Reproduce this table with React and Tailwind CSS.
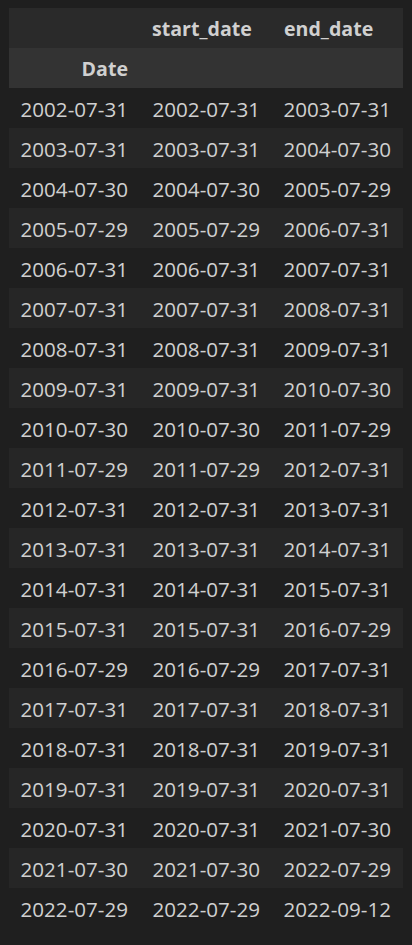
import React from "react";

const rows = [
  ["2002-07-31", "2002-07-31", "2003-07-31"],
  ["2003-07-31", "2003-07-31", "2004-07-30"],
  ["2004-07-30", "2004-07-30", "2005-07-29"],
  ["2005-07-29", "2005-07-29", "2006-07-31"],
  ["2006-07-31", "2006-07-31", "2007-07-31"],
  ["2007-07-31", "2007-07-31", "2008-07-31"],
  ["2008-07-31", "2008-07-31", "2009-07-31"],
  ["2009-07-31", "2009-07-31", "2010-07-30"],
  ["2010-07-30", "2010-07-30", "2011-07-29"],
  ["2011-07-29", "2011-07-29", "2012-07-31"],
  ["2012-07-31", "2012-07-31", "2013-07-31"],
  ["2013-07-31", "2013-07-31", "2014-07-31"],
  ["2014-07-31", "2014-07-31", "2015-07-31"],
  ["2015-07-31", "2015-07-31", "2016-07-29"],
  ["2016-07-29", "2016-07-29", "2017-07-31"],
  ["2017-07-31", "2017-07-31", "2018-07-31"],
  ["2018-07-31", "2018-07-31", "2019-07-31"],
  ["2019-07-31", "2019-07-31", "2020-07-31"],
  ["2020-07-31", "2020-07-31", "2021-07-30"],
  ["2021-07-30", "2021-07-30", "2022-07-29"],
  ["2022-07-29", "2022-07-29", "2022-09-12"],
];

export default function App() {
  return (
    <div
      className="w-[412px] h-[945px] bg-[#1f1f1f] pt-2 pl-[9px] text-[#d0d0d0] text-[20.6px]"
      style={{ fontFamily: '"Open Sans", "Noto Sans", sans-serif' }}
    >
      <div className="w-[394px] flex flex-col">
        <div className="h-10 pt-[2px] bg-[#2a2a2a] grid grid-cols-[131px_132px_131px] items-center font-bold text-[19.6px]">
          <div />
          <div className="pl-3">start_date</div>
          <div className="pl-3">end_date</div>
        </div>
        <div className="h-10 pt-[2px] bg-[#333333] grid grid-cols-[131px_132px_131px] items-center font-bold text-[19.6px]">
          <div className="text-right pr-3">Date</div>
          <div />
          <div />
        </div>
        {rows.map((r, i) => (
          <div
            key={i}
            className={
              "h-10 pt-[3px] grid grid-cols-[131px_132px_131px] items-center " +
              (i % 2 === 1 ? "bg-[#262626]" : "")
            }
          >
            <div className="text-right pr-3">{r[0]}</div>
            <div className="text-right pr-3">{r[1]}</div>
            <div className="text-right pr-3">{r[2]}</div>
          </div>
        ))}
      </div>
    </div>
  );
}
